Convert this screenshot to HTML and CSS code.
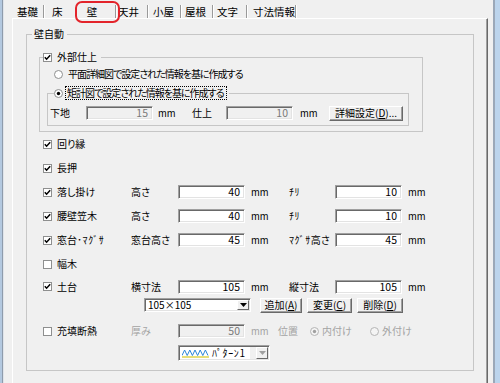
FILE: index.html
```html
<!DOCTYPE html>
<html>

<head>
    <meta charset="utf-8">
    <title>壁</title>
    <link rel="stylesheet" href="styles.css">
</head>

<body>
    <div class="window">
        <div class="frame-left"></div>
        <div class="client">
            <div class="tabs">
                <span class="tab tab-kiso">基礎</span>
                <span class="tab tab-yuka">床</span>
                <span class="tab tab-kabe">壁</span>
                <span class="tab tab-tenjo">天井</span>
                <span class="tab tab-koya">小屋</span>
                <span class="tab tab-yane">屋根</span>
                <span class="tab tab-moji">文字</span>
                <span class="tab tab-sunpo">寸法情報</span>
                <div class="mark"></div>
            </div>

            <div class="panel">
                <fieldset class="group group-auto">
                    <legend>壁自動</legend>

                    <fieldset class="group group-outer">
                        <legend class="legend-check">
                            <svg class="check" width="9" height="9" viewBox="0 0 9 9"><rect x="0.5" y="0.5" width="8" height="8" fill="#fff" stroke="#8e8f8f"/><path d="M1.8 4.2 L3.6 6.2 L7.2 2.2" fill="none" stroke="#000" stroke-width="1.5"/></svg>
                            <span>外部仕上</span>
                        </legend>
                        <div class="radio-row">
                            <svg class="radio" width="9" height="9" viewBox="0 0 9 9"><circle cx="4.5" cy="4.5" r="4" fill="#fff" stroke="#8e8f8f"/></svg>
                            <span class="sentence">平面詳細図で設定された情報を基に作成する</span>
                        </div>

                        <fieldset class="group group-inner">
                            <legend class="legend-check">
                                <svg class="radio" width="9" height="9" viewBox="0 0 9 9"><circle cx="4.5" cy="4.5" r="4" fill="#fff" stroke="#8e8f8f"/><circle cx="4.5" cy="4.5" r="1.7" fill="#000"/></svg>
                                <span class="focus sentence">矩計図で設定された情報を基に作成する</span>
                            </legend>
                            <div class="base-row">
                                <span>下地</span>
                                <div class="field disabled">15</div>
                                <span class="unit">mm</span>
                                <span>仕上</span>
                                <div class="field disabled">10</div>
                                <span class="unit">mm</span>
                                <div class="btn">詳細設定(<u>D</u>)...</div>
                            </div>
                        </fieldset>
                    </fieldset>

                    <div class="row">
                        <svg class="check" width="9" height="9" viewBox="0 0 9 9"><rect x="0.5" y="0.5" width="8" height="8" fill="#fff" stroke="#8e8f8f"/><path d="M1.8 4.2 L3.6 6.2 L7.2 2.2" fill="none" stroke="#000" stroke-width="1.5"/></svg>
                        <span>回り縁</span>
                    </div>
                    <div class="row">
                        <svg class="check" width="9" height="9" viewBox="0 0 9 9"><rect x="0.5" y="0.5" width="8" height="8" fill="#fff" stroke="#8e8f8f"/><path d="M1.8 4.2 L3.6 6.2 L7.2 2.2" fill="none" stroke="#000" stroke-width="1.5"/></svg>
                        <span>長押</span>
                    </div>
                    <div class="row">
                        <svg class="check" width="9" height="9" viewBox="0 0 9 9"><rect x="0.5" y="0.5" width="8" height="8" fill="#fff" stroke="#8e8f8f"/><path d="M1.8 4.2 L3.6 6.2 L7.2 2.2" fill="none" stroke="#000" stroke-width="1.5"/></svg>
                        <span>落し掛け</span>
                        <span>高さ</span>
                        <div class="field">40</div>
                        <span class="unit">mm</span>
                        <span class="hw">ﾁﾘ</span>
                        <div class="field">10</div>
                        <span class="unit">mm</span>
                    </div>
                    <div class="row">
                        <svg class="check" width="9" height="9" viewBox="0 0 9 9"><rect x="0.5" y="0.5" width="8" height="8" fill="#fff" stroke="#8e8f8f"/><path d="M1.8 4.2 L3.6 6.2 L7.2 2.2" fill="none" stroke="#000" stroke-width="1.5"/></svg>
                        <span>腰壁笠木</span>
                        <span>高さ</span>
                        <div class="field">40</div>
                        <span class="unit">mm</span>
                        <span class="hw">ﾁﾘ</span>
                        <div class="field">10</div>
                        <span class="unit">mm</span>
                    </div>
                    <div class="row">
                        <svg class="check" width="9" height="9" viewBox="0 0 9 9"><rect x="0.5" y="0.5" width="8" height="8" fill="#fff" stroke="#8e8f8f"/><path d="M1.8 4.2 L3.6 6.2 L7.2 2.2" fill="none" stroke="#000" stroke-width="1.5"/></svg>
                        <span>窓台<span class="hw">･ﾏｸﾞｻ</span></span>
                        <span>窓台高さ</span>
                        <div class="field">45</div>
                        <span class="unit">mm</span>
                        <span><span class="hw">ﾏｸﾞｻ</span>高さ</span>
                        <div class="field">45</div>
                        <span class="unit">mm</span>
                    </div>
                    <div class="row">
                        <svg class="check" width="9" height="9" viewBox="0 0 9 9"><rect x="0.5" y="0.5" width="8" height="8" fill="#fff" stroke="#8e8f8f"/></svg>
                        <span>幅木</span>
                    </div>
                    <div class="row row-dodai">
                        <svg class="check" width="9" height="9" viewBox="0 0 9 9"><rect x="0.5" y="0.5" width="8" height="8" fill="#fff" stroke="#8e8f8f"/><path d="M1.8 4.2 L3.6 6.2 L7.2 2.2" fill="none" stroke="#000" stroke-width="1.5"/></svg>
                        <span>土台</span>
                        <span>横寸法</span>
                        <div class="field">105</div>
                        <span class="unit">mm</span>
                        <span>縦寸法</span>
                        <div class="field">105</div>
                        <span class="unit">mm</span>
                    </div>
                    <div class="size-row">
                        <div class="combo">
                            <span class="combo-text">105×105</span>
                            <span class="combo-arrow">
                                <svg width="7" height="4" viewBox="0 0 7 4"><path d="M0 0 H7 L3.5 4 Z" fill="#000"/></svg>
                            </span>
                        </div>
                        <div class="btn btn-add">追加(<u>A</u>)</div>
                        <div class="btn btn-edit">変更(<u>C</u>)</div>
                        <div class="btn btn-del">削除(<u>D</u>)</div>
                    </div>
                    <div class="row row-insul">
                        <svg class="check" width="9" height="9" viewBox="0 0 9 9"><rect x="0.5" y="0.5" width="8" height="8" fill="#fff" stroke="#8e8f8f"/></svg>
                        <span>充填断熱</span>
                        <span class="gray">厚み</span>
                        <div class="field disabled">50</div>
                        <span class="unit gray">mm</span>
                        <span class="gray">位置</span>
                        <span class="opt gray">
                            <svg class="radio" width="9" height="9" viewBox="0 0 9 9"><circle cx="4.5" cy="4.5" r="4" fill="#f4f4f4" stroke="#b5b5b5"/><circle cx="4.5" cy="4.5" r="1.7" fill="#a0a0a0"/></svg>
                            内付け
                        </span>
                        <span class="opt gray">
                            <svg class="radio" width="9" height="9" viewBox="0 0 9 9"><circle cx="4.5" cy="4.5" r="4" fill="#f4f4f4" stroke="#b5b5b5"/></svg>
                            外付け
                        </span>
                    </div>
                    <div class="pattern-row">
                        <div class="combo combo-disabled">
                            <span class="combo-text">
                                <svg class="pattern" width="27" height="9" viewBox="0 0 27 9"><path d="M0 6.5 L2.6 1 L5.2 6.5 L7.8 1 L10.4 6.5 L13 1 L15.6 6.5 L18.2 1 L20.8 6.5 L23.4 1 L26 6.5" fill="none" stroke="#2b86d8" stroke-width="1"/><path d="M0 8 H27" stroke="#d6c81e" stroke-width="1.2"/></svg>
                                <span class="hw">ﾊﾟﾀｰﾝ1</span>
                            </span>
                            <span class="combo-arrow">
                                <svg width="7" height="4" viewBox="0 0 7 4"><path d="M0 0 H7 L3.5 4 Z" fill="#a0a0a0"/></svg>
                            </span>
                        </div>
                    </div>
                </fieldset>
            </div>
        </div>
        <div class="frame-right"></div>
    </div>
</body>

</html>
```

FILE: styles.css
```css
body {
    margin: 0;
    background: #f0f0f0;
    font-family: "Noto Sans CJK JP", "Noto Sans", sans-serif;
    font-size: 10px;
    line-height: 14px;
    color: #000;
    font-feature-settings: "palt";
}

.window {
    display: flex;
    height: 383px;
    overflow: hidden;
}

.frame-left {
    width: 4px;
    background: linear-gradient(to right, #b3c8df 0, #b3c8df 2px, #8e9bab 2px, #8e9bab 3px, #dfe4ea 3px);
}

.frame-right {
    width: 7px;
    background: linear-gradient(to right, #9ba8b8 0, #9ba8b8 2px, #bcd4ec 2px);
}

.client {
    flex: 1;
    display: flex;
    flex-direction: column;
}

/* tab strip */

.tabs {
    position: relative;
    display: flex;
    height: 18px;
    box-sizing: border-box;
    padding: 5px 0 0 8px;
    font-size: 10.5px;
}

.tab {
    box-sizing: border-box;
    height: 13px;
    line-height: 13px;
    border-right: 1px solid #9a9a9a;
    box-shadow: 1px 0 0 #fff;
    white-space: nowrap;
}

.tab-kiso { width: 32px; padding-left: 5px; }
.tab-yuka { width: 25px; padding-left: 8px; border-right-color: transparent; box-shadow: none; }
.tab-kabe { width: 47px; text-align: center; }
.tab-tenjo { width: 32px; padding-left: 2px; }
.tab-koya { width: 33px; padding-left: 5px; }
.tab-yane { width: 32px; padding-left: 4px; }
.tab-moji { width: 34px; padding-left: 4px; }
.tab-sunpo { width: 49px; padding-left: 6px; }

.mark {
    position: absolute;
    left: 71px;
    top: 1px;
    width: 45px;
    height: 22px;
    box-sizing: border-box;
    border: 2px solid #e3242b;
    border-radius: 7px;
    z-index: 2;
}

/* tab page */

.panel {
    flex: 1;
    margin-left: 8px;
    width: 476px;
    box-sizing: border-box;
    border-top: 1px solid #fff;
    border-left: 1px solid #fff;
    border-right: 1px solid #696969;
    box-shadow: inset -1px 0 0 #a0a0a0;
}

.group {
    margin: 0;
    padding: 0;
    min-width: 0;
    border: 1px solid #c6c6c6;
}

.group > legend {
    padding: 0 3px 0 2px;
    line-height: 14px;
    margin-left: 5px;
}

.group-auto {
    margin: 8px 0 0 13px;
    width: 448px;
    box-sizing: border-box;
    padding-bottom: 9px;
}

.group-outer {
    margin: 9px 0 0 12px;
    width: 384px;
    box-sizing: border-box;
}

.group-outer > legend {
    margin-left: 3px;
    padding: 0 4px 0 0;
}

.legend-check {
    display: flex;
    align-items: center;
    gap: 5px;
}

.radio-row {
    display: flex;
    align-items: center;
    gap: 5px;
    height: 14px;
    margin-top: 3px;
    padding-left: 14px;
}

.sentence {
    letter-spacing: -1px;
}

/* half-width katakana, as the dialog font draws it */
.hw {
    font-feature-settings: normal;
    letter-spacing: 0.6px;
}

.group-inner {
    margin: 6px 0 5px 7px;
    width: 362px;
    box-sizing: border-box;
    padding-bottom: 4px;
}

.group-inner > legend {
    margin-left: 6px;
    gap: 3px;
    padding: 0 3px 0 0;
}

.focus {
    outline: 1px dotted #000;
    padding: 0 2px 0 1px;
    line-height: 12px;
}

.base-row {
    display: grid;
    grid-template-columns: 36px 67px 39px 34px 67px 36px 74px;
    align-items: center;
    height: 16px;
    margin-top: 6px;
    padding-left: 2px;
}

.base-row .unit {
    padding-left: 5px;
}

.base-row .unit:nth-of-type(4) {
    padding-left: 7px;
}

/* rows with a check box */

.row {
    display: grid;
    grid-template-columns: 14px 74px 47px 67px 44px 46px 67px auto;
    align-items: center;
    height: 24px;
    padding-left: 16px;
    white-space: nowrap;
}

.row-dodai {
    height: 21px;
}

.row-insul {
    grid-template-columns: 14px 74px 47px 67px 33px 32px 60px auto;
    height: 22px;
    margin-top: 7px;
}

.check,
.radio {
    display: block;
}

.field {
    height: 14px;
    box-sizing: border-box;
    background: #fff;
    border-top: 1px solid #a0a0a0;
    border-left: 1px solid #a0a0a0;
    border-right: 1px solid #fff;
    border-bottom: 1px solid #fff;
    box-shadow: inset 1px 1px 0 #696969, inset -1px -1px 0 #e3e3e3;
    text-align: right;
    padding-right: 4px;
    line-height: 12px;
    font-size: 10.5px;
}

.field.disabled {
    background: #f0f0f0;
    color: #7a7a7a;
}

.unit {
    padding-left: 6px;
    font-size: 9.5px;
}

.gray {
    color: #a3a3a3;
}

.opt {
    display: flex;
    align-items: center;
    gap: 3px;
}

.btn {
    height: 15px;
    box-sizing: border-box;
    display: flex;
    align-items: center;
    justify-content: center;
    background: #f0f0f0;
    border: 1px solid;
    border-color: #fff #696969 #696969 #fff;
    box-shadow: inset -1px -1px 0 #a0a0a0;
    white-space: nowrap;
}

/* size and pattern combos */

.size-row {
    display: flex;
    align-items: center;
    height: 16px;
    padding-left: 117px;
}

.combo {
    display: flex;
    align-items: center;
    height: 14px;
    width: 107px;
    box-sizing: border-box;
    background: #fff;
    border-top: 1px solid #a0a0a0;
    border-left: 1px solid #a0a0a0;
    border-right: 1px solid #fff;
    border-bottom: 1px solid #fff;
    box-shadow: inset 1px 1px 0 #696969, inset -1px -1px 0 #e3e3e3;
    padding: 1px;
}

.combo-text {
    flex: 1;
    display: flex;
    align-items: center;
    gap: 3px;
    padding-left: 2px;
    white-space: nowrap;
}

.combo-arrow {
    width: 12px;
    height: 100%;
    box-sizing: border-box;
    display: flex;
    align-items: center;
    justify-content: center;
    background: #f0f0f0;
    border: 1px solid;
    border-color: #fff #696969 #696969 #fff;
}

.btn-add { width: 42px; margin-left: 9px; }
.btn-edit { width: 45px; margin-left: 5px; }
.btn-del { width: 46px; margin-left: 5px; }

.pattern-row {
    margin-top: 3px;
    padding-left: 151px;
    height: 16px;
}

.combo-disabled {
    width: 92px;
    height: 16px;
    background: #f0f0f0;
}

.combo-disabled .combo-text {
    background: #fff;
    height: 100%;
    margin-right: 6px;
}
```
